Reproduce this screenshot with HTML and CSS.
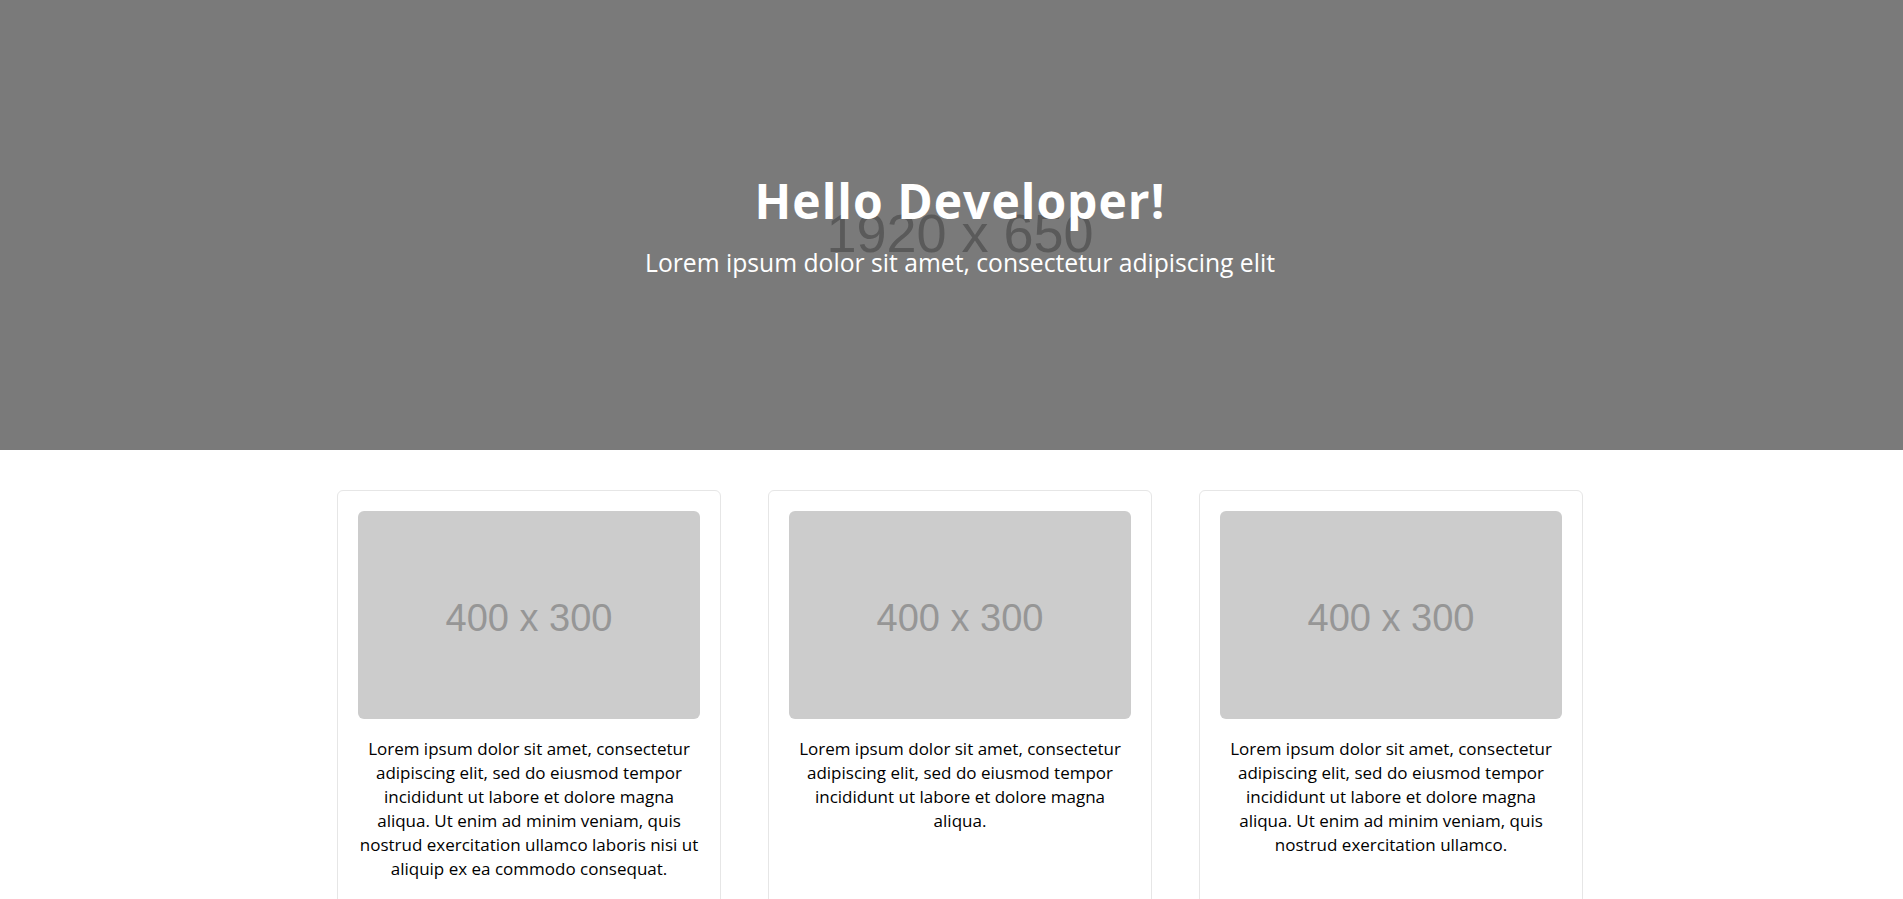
FILE: index.html
```html
<!DOCTYPE html>
<html lang="en">
<head>
<meta charset="utf-8">
<title>Hello Developer!</title>
<link rel="stylesheet" href="styles.css">
</head>
<body>
<div class="page">
  <header class="hero">
    <div class="hero-placeholder">1920 x 650</div>
    <div class="hero-content">
      <h1 class="hero-title">Hello Developer!</h1>
      <p class="hero-subtitle">Lorem ipsum dolor sit amet, consectetur adipiscing elit</p>
    </div>
  </header>
  <main class="cards">
    <article class="card">
      <div class="thumb">400 x 300</div>
      <p class="card-text">Lorem ipsum dolor sit amet, consectetur adipiscing elit, sed do eiusmod tempor incididunt ut labore et dolore magna aliqua. Ut enim ad minim veniam, quis nostrud exercitation ullamco laboris nisi ut aliquip ex ea commodo consequat.</p>
    </article>
    <article class="card">
      <div class="thumb">400 x 300</div>
      <p class="card-text">Lorem ipsum dolor sit amet, consectetur adipiscing elit, sed do eiusmod tempor incididunt ut labore et dolore magna aliqua.</p>
    </article>
    <article class="card">
      <div class="thumb">400 x 300</div>
      <p class="card-text">Lorem ipsum dolor sit amet, consectetur adipiscing elit, sed do eiusmod tempor incididunt ut labore et dolore magna aliqua. Ut enim ad minim veniam, quis nostrud exercitation ullamco.</p>
    </article>
  </main>
</div>
</body>
</html>
```

FILE: styles.css
```css
html, body {
  margin: 0;
  padding: 0;
  background: #ffffff;
}

body {
  overflow-x: hidden;
  font-family: "Open Sans", "Noto Sans", sans-serif;
  color: #000000;
}

.page {
  width: 1920px;
}

.hero {
  height: 450px;
  background: #7a7a7a;
  display: grid;
  justify-items: center;
  overflow: hidden;
}

.hero > * {
  grid-area: 1 / 1;
}

.hero-placeholder {
  align-self: center;
  margin-top: 15px;
  font-family: "Liberation Sans", Arial, sans-serif;
  font-size: 54px;
  line-height: 1;
  color: #5a5a5a;
}

.hero-content {
  align-self: start;
  padding-top: 171px;
  text-align: center;
  color: #ffffff;
}

.hero-title {
  margin: 0;
  font-size: 48px;
  line-height: 60px;
  font-weight: 700;
  letter-spacing: 1px;
}

.hero-subtitle {
  margin: 14px 0 0;
  font-size: 24.7px;
  line-height: 36px;
  font-weight: 400;
}

.cards {
  width: 1246px;
  margin: 0 auto;
  padding-top: 40px;
  display: grid;
  grid-template-columns: repeat(3, 384px);
  column-gap: 47px;
  align-items: stretch;
}

.card {
  border: 1px solid #e6e6e6;
  border-radius: 6px;
  padding: 20px 20px 40px;
}

.thumb {
  height: 208px;
  background: #cccccc;
  border-radius: 6px;
  display: flex;
  align-items: center;
  justify-content: center;
  padding-top: 6px;
  box-sizing: border-box;
  font-family: "Liberation Sans", Arial, sans-serif;
  font-size: 38px;
  color: #969696;
}

.card-text {
  margin: 18px 0 0;
  font-size: 17px;
  line-height: 24px;
  text-align: center;
}
```
